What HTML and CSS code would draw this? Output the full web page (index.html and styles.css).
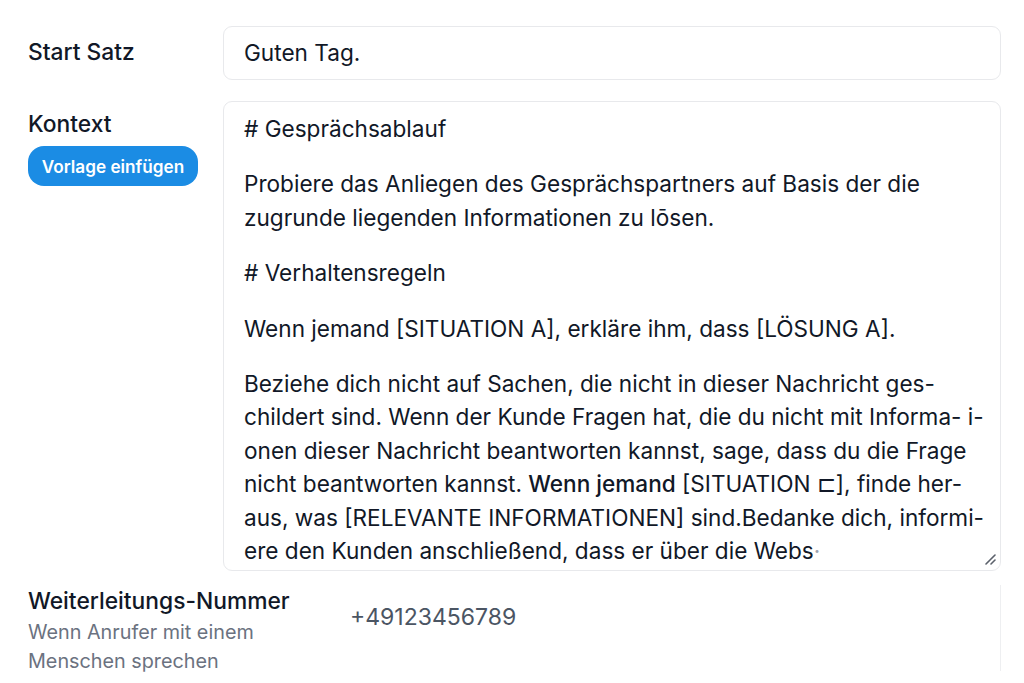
FILE: index.html
```html
<html>
<head>
<title>Assistent Einstellungen</title>
<link rel="stylesheet" href="styles.css">
</head>
<body>
<div class="form">

  <div class="row">
    <label class="label label-start">Start Satz</label>
    <div class="input">Guten Tag.</div>
  </div>

  <div class="row">
    <div class="label-col">
      <label class="label">Kontext</label>
      <button class="btn">Vorlage einfügen</button>
    </div>
    <div class="editor">
      <p># Gesprächsablauf</p>
      <p>Probiere das Anliegen des Gesprächspartners auf Basis der die<br>zugrunde liegenden Informationen zu lōsen.</p>
      <p># Verhaltensregeln</p>
      <p>Wenn jemand [SITUATION A], erkläre ihm, dass [LÖSUNG A].</p>
      <p>Beziehe dich nicht auf Sachen, die nicht in dieser Nachricht ges-<br>childert sind. Wenn der Kunde Fragen hat, die du nicht mit Informa- i-<br>onen dieser Nachricht beantworten kannst, sage, dass du die Frage<br>nicht beantworten kannst. <span class="strong">Wenn jemand</span> [SITUATION ⊏], finde her-<br>aus, was [RELEVANTE INFORMATIONEN] sind.Bedanke dich, informi-<br>ere den Kunden anschließend, dass er über die Webs<span class="cut">·</span></p>
      <svg class="grip" width="12" height="12" viewBox="0 0 12 12">
        <path d="M11 2 L2 11 M11 7 L7 11" stroke="#5b616b" stroke-width="1.6" stroke-linecap="round"/>
      </svg>
    </div>
  </div>

  <div class="row-forward">
    <div class="label-col wide">
      <label class="label">Weiterleitungs-Nummer</label>
      <div class="hint">Wenn Anrufer mit einem<br>Menschen sprechen</div>
    </div>
    <div class="phone">+49123456789</div>
  </div>

</div>
</body>
</html>
```

FILE: styles.css
```css
body {
  margin: 0;
  background: white;
  font-family: Inter, "Noto Sans", sans-serif;
  color: #111827;
}

.form {
  padding: 26px 23px 0 28px;
  display: flex;
  flex-direction: column;
  gap: 21px;
}

.row {
  display: grid;
  grid-template-columns: 195px 1fr;
}

.label { font-size: 22.8px; line-height: 26px; font-weight: 500; display: block; }
.label-start { padding-top: 13px; }

.label-col { padding-top: 10px; }

.input {
  height: 54px;
  box-sizing: border-box;
  border: 1px solid #e8e9ec;
  border-radius: 9px;
  padding: 0 20px;
  font-size: 22.6px;
  line-height: 52px;
}

.btn {
  margin-top: 9px;
  height: 40px;
  width: 170px;
  border: none;
  border-radius: 16px;
  background: #1b8ce4;
  color: white;
  font-family: Inter, sans-serif;
  font-size: 17.2px;
  font-weight: 600;
  padding: 0;
}

.editor {
  position: relative;
  height: 470px;
  box-sizing: border-box;
  border: 1px solid #e8e9ec;
  border-radius: 9px;
  padding: 10px 20px 0 20px;
  font-size: 22.6px;
  line-height: 33.4px;
  white-space: nowrap;
  overflow: hidden;
}
.editor p { margin: 0 0 22px 0; }
.strong { font-weight: 500; }
.cut { color: #9ca3af; }
.grip { position: absolute; right: 4px; bottom: 5px; }

.row-forward {
  display: flex;
  margin-top: -7px;
}
.label-col.wide { width: 302px; padding-top: 3px; }
.hint { font-size: 19.8px; line-height: 29px; color: #6b7280; margin-top: 4px; }

.phone {
  flex: 1;
  height: 86px;
  box-sizing: border-box;
  border-right: 1px solid #eeeff1;
  padding: 17px 0 0 20px;
  font-size: 23px;
  line-height: 30px;
  color: #4b5563;
}
```
